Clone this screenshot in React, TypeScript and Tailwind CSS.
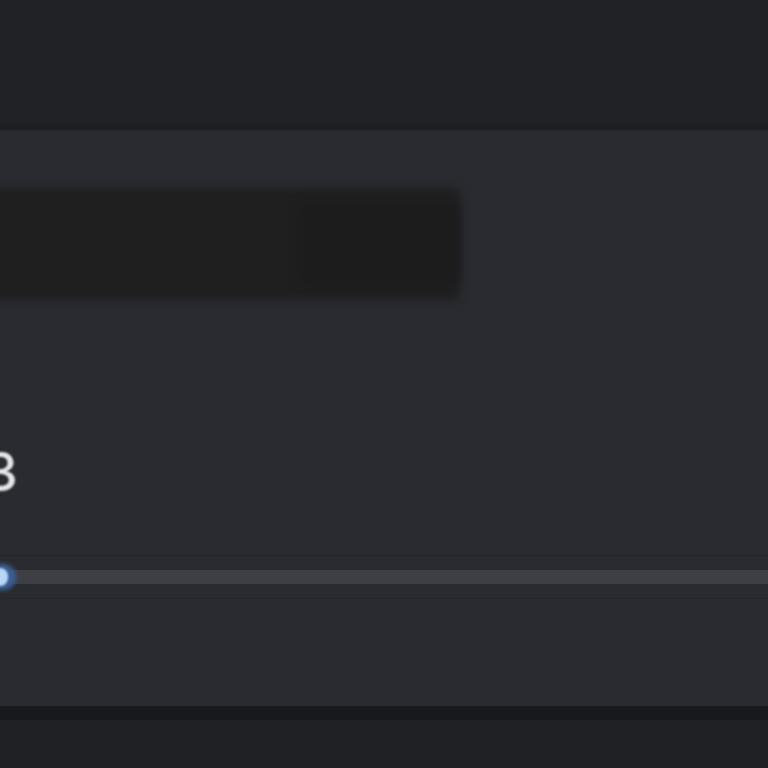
import React from "react";

export default function App() {
  return (
    <div className="w-[768px] h-[768px] overflow-hidden bg-[#202125] flex flex-col" style={{ fontFamily: "Inter, 'Liberation Sans', sans-serif" }}>
      <div className="h-[124px] shrink-0 bg-[#212226]" />
      <div className="h-[6px] shrink-0 bg-[#1d1e21] blur-[1px]" />
      <div className="h-[576px] shrink-0 bg-[#2a2b30] flex flex-col overflow-hidden">
        <div className="h-[58px] shrink-0" />
        <div className="relative flex items-start">
          <div className="w-[470px] h-[112px] -ml-[10px] bg-[#1f1f20] rounded-md blur-[4px]" />
          <div className="absolute left-[300px] top-[14px] w-[160px] h-[82px] bg-[#1c1c1d] rounded-md blur-[5px]" />
        </div>
        <div className="h-[148px] shrink-0" />
        <div className="flex items-center h-[48px]">
          <span className="-ml-[16px] text-[54px] font-medium leading-none text-[#e6e6e8] blur-[0.8px]">3</span>
        </div>
        <div className="h-[59px] shrink-0" />
        <div className="flex flex-col">
          <div className="h-px bg-[#25262a]" />
          <div className="h-[14px]" />
          <div className="relative flex items-center h-[14px]">
            <div className="w-full h-[14px] bg-[#3e3f44] blur-[0.5px]" />
            <div className="absolute -left-[14px] top-[-6px] w-[30px] h-[26px] rounded-full bg-[#3a5f96] blur-[2px]" />
            <div className="absolute -left-[8px] top-[-2px] w-[16px] h-[18px] rounded-full bg-[#b8d6f5] blur-[1px]" />
          </div>
          <div className="h-[14px]" />
          <div className="h-px bg-[#25262a]" />
        </div>
      </div>
      <div className="h-[4px] shrink-0 bg-[#1a1b1e]" />
      <div className="h-[10px] shrink-0 bg-[#18191c]" />
      <div className="flex-1 bg-[#202125]" />
    </div>
  );
}
